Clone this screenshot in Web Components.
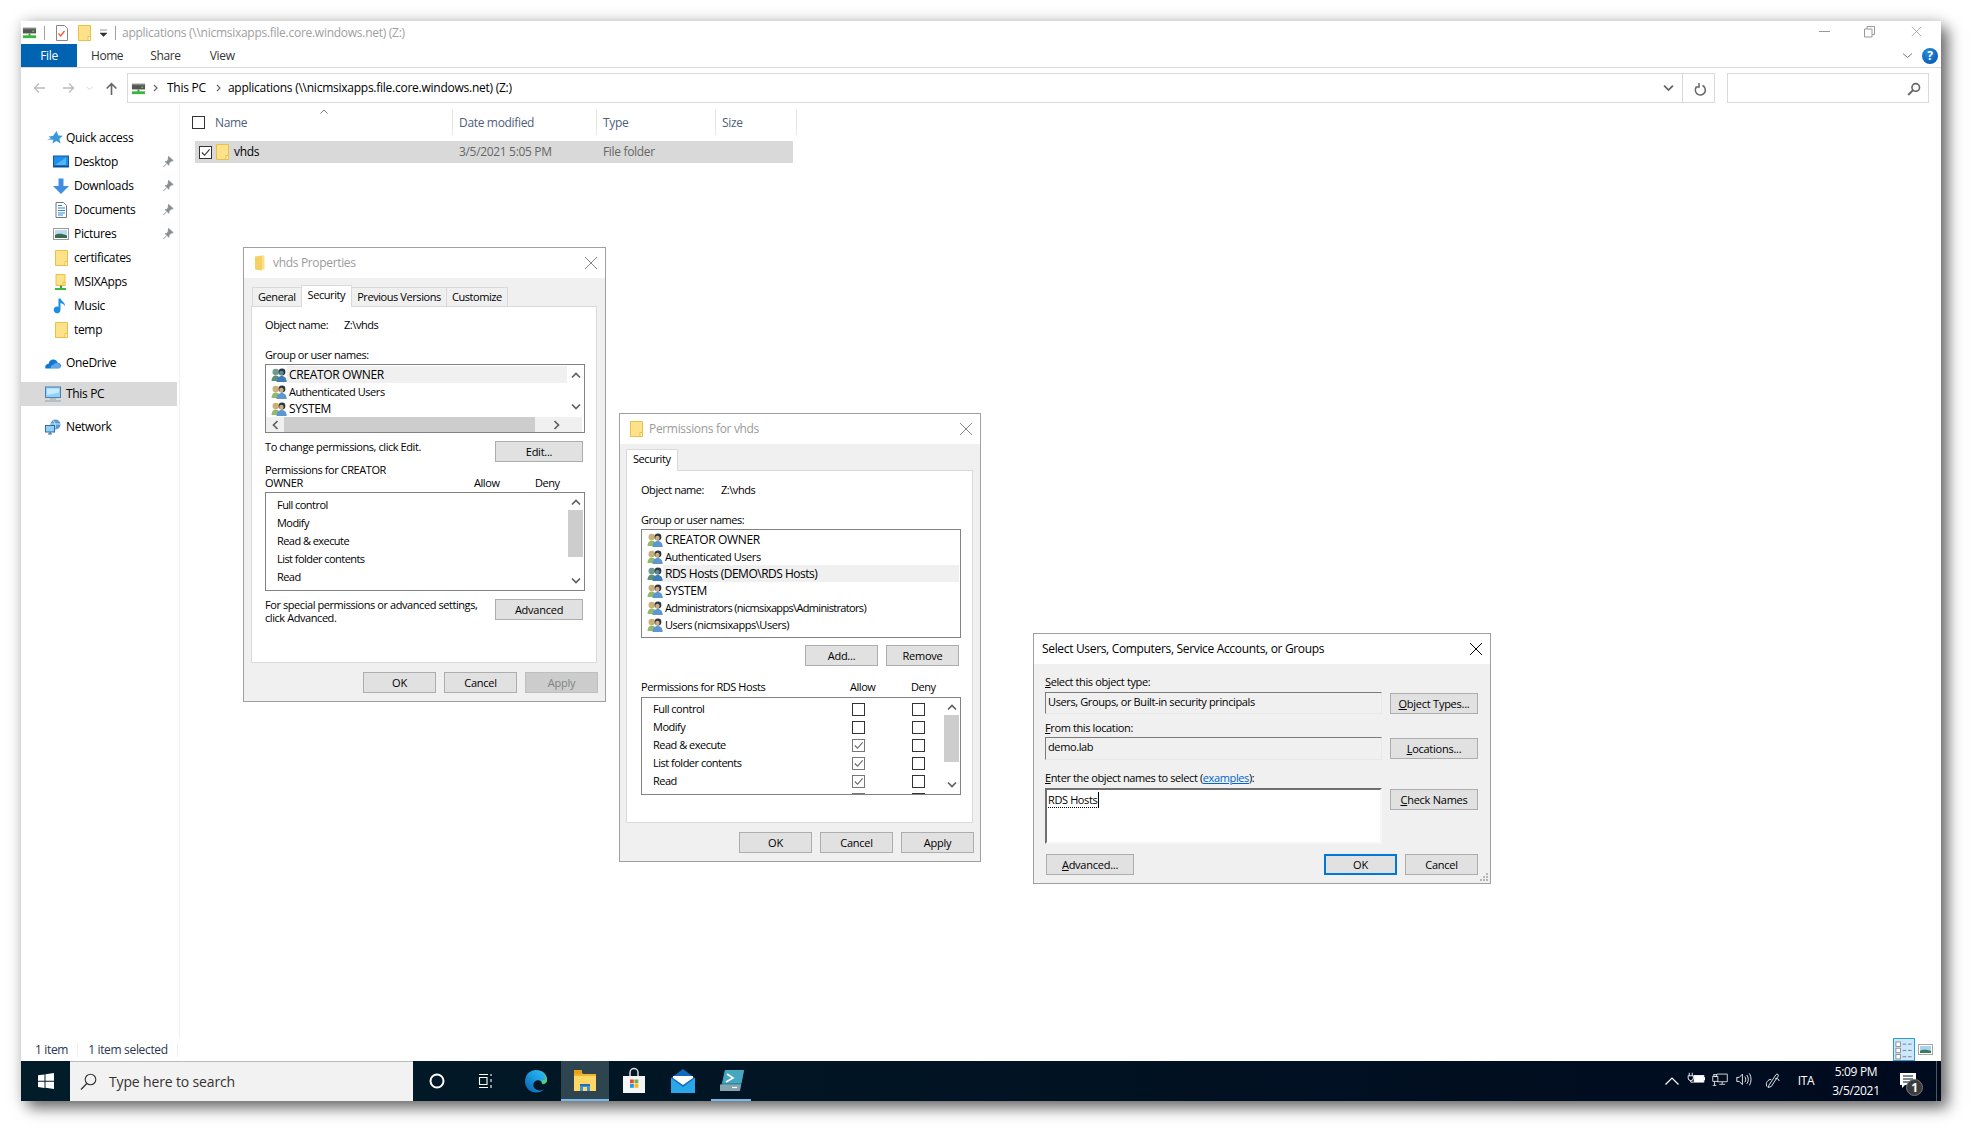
<!DOCTYPE html>
<html lang="en"><head><meta charset="utf-8"><title>Explorer</title>
<style>html,body{margin:0;padding:0;background:#fff;width:1983px;height:1143px;overflow:hidden}</style></head>
<body>
<x-desktop></x-desktop>
<script>
const def=(tag,css,html)=>customElements.define(tag,class extends HTMLElement{constructor(){super();this.attachShadow({mode:'open'}).innerHTML=`<style>${css}</style>${html}`;}});
const FONT='"Open Sans","Noto Sans",sans-serif';
const folder=`<path d="M2.5 .5h12v15h-12z" fill="#fde18b" stroke="#ebc044"/><path d="M12 11.500h2.500v4H12z" fill="#fff2c4" stroke="#ebc044"/>`;
const folderw=`<path d="M.5 .5h12v15H.5z" fill="#fde18b" stroke="#ebc044"/><path d="M10 11.500h2.500v4H10z" fill="#fff2c4" stroke="#ebc044"/>`;
const foldern=`<path d="M1 1.500l7-1v15l-7-1z" fill="#f6d063"/><path d="M8 .5h2.500v14H8z" fill="#fbe08a"/>`;
const users=(a,b,c,f)=>`<circle cx="4.800" cy="5" r="3.300" fill="${a}"/><path d="M.5 14c0-3.600 1.700-5.600 4.300-5.600 1.600 0 2.600.7 3.200 1.900V14z" fill="${b}"/><circle cx="11" cy="5" r="3.400" fill="#2b3644"/><circle cx="10.400" cy="6" r="2.200" fill="${f}"/><path d="M5.500 15c0-3.800 2.200-6 5.200-6s5 2.200 5 6z" fill="${c}"/>`;
const drive=`<rect x="1" y="3" width="14" height="6" fill="#555"/><rect x="1" y="3" width="14" height="1.500" fill="#888"/><rect x="11" y="6" width="2" height="1.200" fill="#5fdc5f"/><rect x="7" y="9" width="2" height="3" fill="#2da52d"/><rect x="1" y="11" width="14" height="3" fill="#3bb53b"/>`;
const ICONS={
folder,folderw,foldern,
drive,
star:`<path d="M9.500 1l1.800 4.400 4.700.4-3.600 3 1.200 4.700L9.500 11l-4.100 2.500 1-3.800L0 9.500l4-1.200L1.500 6.500l4.500-.6z" fill="#3a96dd"/>`,
desktop:`<rect x=".5" y="2" width="15" height="11" fill="#1e90e8" stroke="#0b5aa5"/><path d="M2 11L13 3.500V11z" fill="#54b4f5"/><rect x="1" y="11.500" width="14" height="1.500" fill="#0b4f8f"/>`,
download:`<path d="M5.500 .5h5v7.500H16l-8 8-8-8h5.500z" fill="#3f8ee0"/>`,
doc:`<path d="M3 .5h7.500l3 3v12H3z" fill="#fff" stroke="#777"/><path d="M5 3.500h4M5 6h7M5 8.500h7M5 11h7M5 13h5" stroke="#2a8ad4"/>`,
pic:`<rect x=".5" y="2.500" width="15" height="11" fill="#fff" stroke="#999"/><rect x="2" y="4" width="12" height="8" fill="#bcd9ee"/><path d="M2 9c3-2 7-1.500 12 .5V12H2z" fill="#3a6a52"/>`,
netfolder:`<path d="M3 .5h9v11H3z" fill="#fde18b" stroke="#ebc044"/><path d="M10 8h2v3.500h-2z" fill="#fff2c4" stroke="#ebc044"/><rect x="7" y="11.500" width="2" height="3" fill="#2da52d"/><rect x="2" y="14" width="11" height="2" fill="#3bb53b"/>`,
music:`<path d="M7.500.5v11.300a3.400 3.400 0 1 1-2-3V.5zM7.500.5c1 3 5 4 4.500 8-.5-2-2.500-3-4.500-3.500z" fill="#1a8fe3"/>`,
cloud:`<path d="M.5 13.500c-.8-2.500.7-4.500 3-4.500C4 5.500 6.500 4 9 4.500c2 .4 3.300 1.800 3.800 3.500 2-.2 3.200 1.500 3.200 3 0 1.500-1 2.500-2.500 2.500z" fill="#0f78d4"/><path d="M6 13.500c-.8-2 .5-3.600 2.500-3.700C9.300 8.500 10.500 8 12 8.100c1.500.1 3 1.200 3.200 2.700.5.500.8 1.500.3 2.700z" fill="#fff" opacity=".35"/>`,
pc:`<rect x=".5" y="1" width="15" height="10.500" fill="#8fd1fb" stroke="#4d7fa8"/><path d="M2 2.500h12v4L2 9z" fill="#c9ebff"/><path d="M5 13h6M0 15h16" stroke="#8fa3b5" stroke-width="1.200"/>`,
net:`<circle cx="10.500" cy="5.500" r="5" fill="#5b9bd5"/><path d="M8 1.500c2 2 3 5 2 8M5.500 5h10" stroke="#cde6f8" fill="none"/><rect x=".5" y="6.500" width="9" height="6.500" fill="#8fd1fb" stroke="#336b9c"/><path d="M3 15h4M5 13v2" stroke="#336b9c" stroke-width="1.200"/>`,
pin:`<path d="M7 1.500l5 4.500-2.500.7-2 2.500L7.500 11l-4-3.700 2.300-.6 1-2.300zM4.800 9.500L1.500 13" fill="#8a8f94" stroke="#8a8f94"/>`,
users:users('#c9b27a','#93b96c','#5e97cf','#d2ac80'),
users2:users('#6f9a8c','#5e8f74','#3f7db8','#5f8795'),
win:`<path d="M0 2.300l6.500-.9v6.300H0zM7.500 1.300L16 0v7.700H7.500zM0 8.700h6.500V15L0 14.100zM7.500 8.700H16V16l-8.500-1.200z" fill="#fff"/>`,
mag:`<circle cx="10.500" cy="6.500" r="5.300" fill="none" stroke="#333" stroke-width="1.100"/><path d="M6.800 10.500L1 16.500" stroke="#333" stroke-width="1.300"/>`,
cortana:`<circle cx="8" cy="8" r="6.500" fill="none" stroke="#fff" stroke-width="2"/>`,
task:`<path d="M3 1.500h9M3 14.500h9M3.500 4.500h7.500v7H3.500zM15 1v2M15 6v3M15 12v3" fill="none" stroke="#fff" stroke-width="1.100"/>`,
edge:`<defs><linearGradient id="e" x1="0" y1="1" x2="1" y2="0"><stop offset="0" stop-color="#0c59a4"/><stop offset=".55" stop-color="#1b9de2"/><stop offset="1" stop-color="#35c1f1"/></linearGradient></defs><path d="M12 1C5.500 1 1 6 1 12.500 1 19 6 23.500 12 23.500c3 0 6-1 8-3-3 1.500-8 1.500-10-2-1.500-2.500-.5-6 2.500-7 2-.7 5-.5 5.500 2.500.3 1.500 1 1.500 2.500 1 1.500-.7 2.500-2 2.500-4C23 5 18 1 12 1z" fill="url(#e)"/><path d="M23 11c0-6-5-10-11-10 5 0 9.500 3 9.500 8 0 2-2.500 3-4 2 .7 2-.2 3 .5 3.500C20 15 23 14 23 11z" fill="#5ed06e"/>`,
explorer:`<path d="M1 4h8l2 2h12v16H1z" fill="#fdd866"/><path d="M1 1h8v4H1z" fill="#e9a318"/><path d="M1 5h22v2H1z" fill="#f0b52e"/><path d="M7 22v-7h10v7h-3v-4h-4v4z" fill="#3f92d8"/><path d="M7 15h10v2H7z" fill="#1d6fb8"/>`,
store:`<path d="M8 7V3.500a4 4 0 0 1 8 0V7" fill="none" stroke="#ddd" stroke-width="1.500"/><rect x="1" y="7" width="22" height="17" fill="#f4f4f4"/><rect x="8" y="10.500" width="3.800" height="3.800" fill="#e74c2d"/><rect x="12.500" y="10.500" width="3.800" height="3.800" fill="#6db33f"/><rect x="8" y="15" width="3.800" height="3.800" fill="#1d9be8"/><rect x="12.500" y="15" width="3.800" height="3.800" fill="#fcb813"/>`,
mail:`<path d="M12 0L24 9v15H0V9z" fill="#0f6cbd"/><path d="M0 9l12 9 12-9v15H0z" fill="#2ba6ea"/><path d="M2 7h20v2l-10 7L2 9z" fill="#fff"/>`,
ps:`<path d="M5 1h19l-4 21H0z" fill="#2a8ca5"/><path d="M5 1h19l-2.500 13H2.600z" fill="#47a7c1"/><path d="M0 15.500h21l-1.300 6.500H0z" fill="#86a5ae"/><path d="M7 5l6 4-7 4" fill="none" stroke="#fff" stroke-width="1.600"/><path d="M12 18.500h5" stroke="#fff" stroke-width="1.200"/>`,
bat:`<path d="M3 1v4M7 1v4M1.500 5h7v3a3 3 0 0 1-7 0zM5 11v2.500h4" fill="none" stroke="#fff" stroke-width="1.200"/><rect x="9.500" y="4.500" width="13" height="9" fill="#fff" stroke="#fff"/><rect x="22.500" y="7" width="1.500" height="4" fill="#fff"/>`,
netw:`<path d="M7 1.500h14v10.500H7M14 12v3M10 15.500h8M1 4.500h7v7H1zM3.500 11.500v5.500M1 17h5" fill="none" stroke="#fff" stroke-width="1.100"/><rect x="2.500" y="2" width="4" height="3" fill="none" stroke="#fff"/>`,
vol:`<path d="M1 5.500h3l4-4v13l-4-4H1zM11 4.500c1.500 2 1.500 5 0 7M13.500 2.500c2.500 3 2.500 8 0 11M16.500 .5c3 4 3 11 0 15" fill="none" stroke="#fff" stroke-width="1.100"/>`,
pen:`<path d="M6 15.500L15 2c1.200-1.700 3.800 0 2.700 1.900L9 17l-4 1zM9 8c-4 0-7.500 4-5.500 9M14 7c3 0 4.500 0 5 3" fill="none" stroke="#fff" stroke-width="1.100"/>`,
action:`<path d="M0 0h16v12H5l-3 3v-3H0z" fill="#fff"/><path d="M3 3h10M3 6h10M3 9h7" stroke="#001020"/>`,
details:`<rect x="1" y="1" width="5" height="5" fill="#fff" stroke="#888"/><rect x="1" y="8" width="5" height="5" fill="#fff" stroke="#888"/><rect x="1" y="15" width="5" height="5" fill="#fff" stroke="#888"/><path d="M8.500 3.500h4m2 0h4m-10 7h4m2 0h4m-10 7h4m2 0h4" stroke="#777"/>`,
thumbs:`<rect x=".5" y=".5" width="14" height="10" fill="#fff" stroke="#a5a5a5"/><rect x="2" y="2" width="11" height="7" fill="#a9d2ee"/><path d="M2 7c3-2 7-1 11 0v2H2z" fill="#3a7a5c"/>`,
searchsm:`<circle cx="9" cy="5" r="3.500" fill="none" stroke="#666" stroke-width="1.500"/><path d="M6.500 7.500L2 12" stroke="#666" stroke-width="1.800"/>`,
refresh:`<path d="M10.500 3.500a5 5 0 1 1-6.500 2M7 1v4H3.500" fill="none" stroke="#666" stroke-width="1.500"/>`,
doccheck:`<path d="M1.500 .5h8l3 3v12h-11z" fill="#fff" stroke="#888"/><path d="M3.500 8.500l2.200 2.500 3.800-5" fill="none" stroke="#e8612c" stroke-width="1.400"/>`,
qatdrop:`<path d="M0 1h7M0 4h7l-3.500 3.500z" fill="#333" stroke="#333" stroke-width=".5"/>`,
x:`<path d="M1 1l12 12M13 1L1 13" fill="none" stroke="currentColor"/>`,
min:`<path d="M0 5.500h11" stroke="#999"/>`,
restore:`<path d="M3 3V.5h7.500v8H8M.5 3h7.500v8H.5z" fill="none" stroke="#999"/>`,
chevd:`<path d="M1 1.500l4.500 4 4.500-4" fill="none" stroke="currentColor" stroke-width="1"/>`,
chevdb:`<path d="M1 1.500l4 4 4-4" fill="none" stroke="currentColor" stroke-width="1.700"/>`,
chevu:`<path d="M1 5.500l4-4 4 4" fill="none" stroke="currentColor" stroke-width="1.700"/>`,
chevut:`<path d="M.5 7.500l6.500-6.500 6.500 6.500" fill="none" stroke="currentColor" stroke-width="1.200"/>`,
chevl:`<path d="M5.500 1l-4 4 4 4" fill="none" stroke="currentColor" stroke-width="1.700"/>`,
chevr:`<path d="M1.500 1l4 4-4 4" fill="none" stroke="currentColor" stroke-width="1.700"/>`,
crumb:`<path d="M1 1l3 3-3 3" fill="none" stroke="#666" stroke-width="1.200"/>`,
back:`<path d="M12 6H1.500M6 1.500L1.500 6 6 10.500" fill="none" stroke="currentColor" stroke-width="1.300"/>`,
fwd:`<path d="M0 6h10.500M6 1.500L10.500 6 6 10.500" fill="none" stroke="currentColor" stroke-width="1.300"/>`,
up:`<path d="M6 12V1.500M1.500 6L6 1.500 10.500 6" fill="none" stroke="currentColor" stroke-width="1.500"/>`,
caret:`<path d="M.5 4.500L4 1l3.500 3.500" fill="none" stroke="#777"/>`,
grip:`<path d="M8 2h2v2H8zM5 5h2v2H5zM8 5h2v2H8zM2 8h2v2H2zM5 8h2v2H5zM8 8h2v2H8z" fill="#b5b5b5"/>`,
check:`<path d="M2 6l3 3 5.500-6.500" fill="none" stroke="currentColor" stroke-width="1.200"/>`
};
const VB={folderw:13,foldern:14,pin:14,mag:17,edge:24,explorer:24,store:24,mail:24,ps:24,details:20,thumbs:15,searchsm:12,refresh:13,doccheck:14,x:14,grip:11,check:12,chevd:11,chevdb:10,chevu:10,chevut:14,chevl:7,chevr:7,crumb:5,back:12,fwd:12,up:12,caret:8,bat:24,netw:22,vol:20,pen:20,qatdrop:7,min:11,restore:11};
customElements.define('x-ic',class extends HTMLElement{
  constructor(){super();this.attachShadow({mode:'open'});}
  connectedCallback(){
    const n=this.getAttribute('n'),w=+(this.getAttribute('w')||16),h=+(this.getAttribute('h')||w),v=VB[n]||16;
    this.shadowRoot.innerHTML=`<style>:host{display:inline-flex;flex:none;width:${w}px;height:${h}px;line-height:0}svg{width:100%;height:100%;overflow:visible}</style><svg viewBox="0 0 ${v} ${v*h/w}" aria-hidden="true">${ICONS[n]}</svg>`;
  }
});
const I=(n,w,h)=>`<x-ic n="${n}" w="${w}" ${h?`h="${h}"`:''}></x-ic>`;

def('w-btn',`:host{display:inline-flex;align-items:center;justify-content:center;box-sizing:border-box;height:21px;width:73px;background:#e1e1e1;border:1px solid #adadad;color:#000;flex:none;font-size:11px;letter-spacing:-.25px}
:host([disabled]){background:#ccc;border-color:#bfbfbf;color:#838383}
:host([def]){border:2px solid #0078d7}`,`<slot></slot>`);

def('w-tab',`:host{display:flex;align-items:center;box-sizing:border-box;height:19px;background:#f0f0f0;border:1px solid #d9d9d9;border-bottom:0;padding:0 5px;margin-right:-1px;flex:none;font-size:11px;letter-spacing:-.42px}
:host([sel]){background:#fff;position:relative;margin-bottom:-1px;height:22px;padding:1px 6px 0;z-index:1;align-items:flex-start}`,`<slot></slot>`);

def('w-dialog',`:host{position:absolute;display:flex;flex-direction:column;box-sizing:border-box;background:#f0f0f0;border:1px solid #a0a0a0;color:#000}
.t{display:flex;align-items:center;height:30px;background:#fff;flex:none;padding:0 7px 0 var(--pl,10px);gap:var(--g,5px);color:var(--tc,#9b9b9b)}
.t span{flex:1}.x{color:var(--tc,#888);display:flex}`,`<div class="t"><slot name="ic"></slot><span><slot name="title"></slot></span><div class="x">${I('x',14)}</div></div><slot></slot>`);

def('scroll-v',`:host{display:flex;flex-direction:column;align-items:center;width:15px;flex:none;height:100%;color:#606060;box-sizing:border-box;padding:var(--sp,5px) 0}
.th{width:15px;background:#cdcdcd;height:47px;margin-top:var(--tm,3px)}.sp{flex:1}`,`${I('chevu',10,7)}<div class="th" part="th"></div><div class="sp"></div>${I('chevdb',10,7)}`);

def('user-row',`:host{display:flex;height:17px;align-items:center;padding-left:5px;white-space:nowrap;font-size:11px;letter-spacing:-.45px}
:host([caps]){font-size:12px;letter-spacing:-.33px}
:host([mix]){font-size:12px;letter-spacing:-.5px}
:host([tight]){letter-spacing:-.66px}
.b{flex:1;height:17px;line-height:17px;padding-left:2px}
:host([hl]) .b{background:#f0f0f0}`,`<slot name="i"></slot><div class="b"><slot></slot></div>`);

const urow=(t,i='users',h='')=>`<user-row ${h}><x-ic slot="i" n="${i}" w="16"></x-ic>${t}</user-row>`;

def('props-dialog',`:host{display:contents}
w-dialog{left:243px;top:247px;width:363px;height:455px}
.tabs{display:flex;align-items:flex-end;margin:7px 0 0 8px;height:21px}
.panel{background:#fff;border:1px solid #d9d9d9;margin:0 8px 0 7px;height:357px;box-sizing:border-box;padding:10px 0 0 13px;font-size:11px;letter-spacing:-.43px;white-space:nowrap}
.l{line-height:16px}
.obj{display:flex}.obj span:first-child{width:79px}
.grp{margin-top:14px}
.box{width:320px;box-sizing:border-box;border:1px solid #828282;background:#fff;margin-top:1px;overflow:hidden}
.ub{height:69px;display:grid;grid-template-columns:1fr 17px;grid-template-rows:52px 15px}
.ub scroll-v{height:52px;--sp:7px;margin-left:1px}.ub scroll-v::part(th){display:none}
.rows{padding-top:1px;overflow:hidden;min-width:0}
.h{grid-column:1/3;display:flex;align-items:center;background:#f0f0f0;color:#606060;padding:0 22px 0 6px;margin:0 2px 0 0}
.h i{display:block;background:#cdcdcd;height:15px;width:251px;margin:0 auto 0 5px}
.sr{display:flex;justify-content:space-between;width:318px;margin-top:8px}
.sr>.tx{line-height:12.500px}
.sr>.u{line-height:16px;margin-top:-2px}
.per{display:grid;grid-template-columns:209px 61px auto;margin-top:1px;line-height:13px;align-items:end}
.pb{height:99px;margin-top:3px;display:flex}
.pr{flex:1;padding:3px 0 0 11px;letter-spacing:-.55px}.pr div{height:18px;line-height:18px}
.pb scroll-v{--sp:6px;--tm:4px;margin-right:1px}
.btns{display:flex;justify-content:flex-end;gap:8px;margin:9px 7px 0 0}`,
`<w-dialog><x-ic slot="ic" n="foldern" w="14" h="16"></x-ic><span slot="title">vhds Properties</span>
<div class="tabs"><w-tab>General</w-tab><w-tab sel>Security</w-tab><w-tab>Previous Versions</w-tab><w-tab>Customize</w-tab></div>
<div class="panel">
<div class="l obj"><span>Object name:</span><span>Z:\\vhds</span></div>
<div class="l grp">Group or user names:</div>
<div class="box ub"><div class="rows">${urow('CREATOR OWNER','users2','hl caps')}${urow('Authenticated Users')}${urow('SYSTEM','users','caps')}</div><scroll-v></scroll-v><div class="h">${I('chevl',7,10)}<i></i>${I('chevr',7,10)}</div></div>
<div class="sr"><span class="u">To change permissions, click Edit.</span><w-btn style="width:88px">Edit...</w-btn></div>
<div class="per"><span>Permissions for CREATOR<br>OWNER</span><span>Allow</span><span>Deny</span></div>
<div class="box pb"><div class="pr"><div>Full control</div><div>Modify</div><div>Read &amp; execute</div><div>List folder contents</div><div>Read</div></div><scroll-v></scroll-v></div>
<div class="sr"><span class="tx">For special permissions or advanced settings,<br>click Advanced.</span><w-btn style="width:88px">Advanced</w-btn></div>
</div>
<div class="btns"><w-btn>OK</w-btn><w-btn>Cancel</w-btn><w-btn disabled>Apply</w-btn></div>
</w-dialog>`);

def('perm-dialog',`:host{display:contents}
w-dialog{left:619px;top:413px;width:362px;height:449px;--g:6px;--pl:10px}
.tabs{display:flex;align-items:flex-end;margin:5px 0 0 6px;height:21px}
.panel{background:#fff;border:1px solid #d9d9d9;margin:0 7px 0 6px;height:353px;box-sizing:border-box;padding:11px 0 0 14px;font-size:11px;letter-spacing:-.45px;white-space:nowrap}
.l{line-height:16px}
.obj{display:flex}.obj span:first-child{width:80px}
.grp{margin-top:14px}
.box{width:320px;box-sizing:border-box;border:1px solid #828282;background:#fff}
.ub{height:109px;margin-top:1px;padding:1px 1px 0 0}
.sr{display:flex;justify-content:flex-end;gap:8px;width:318px;margin-top:7px}
.per{display:grid;grid-template-columns:209px 61px auto;margin-top:13px;line-height:16px}
.pb{height:98px;margin-top:2px;display:flex;overflow:hidden}
.pr{flex:1;padding:2px 0 0 11px;letter-spacing:-.5px}
.pb scroll-v{--sp:6px;--tm:4px;margin-right:1px}
.btns{display:flex;justify-content:flex-end;gap:8px;margin:9px 6px 0 0}`,
`<w-dialog><x-ic slot="ic" n="folderw" w="13" h="16"></x-ic><span slot="title">Permissions for vhds</span>
<div class="tabs"><w-tab sel>Security</w-tab></div>
<div class="panel">
<div class="l obj"><span>Object name:</span><span>Z:\\vhds</span></div>
<div class="l grp">Group or user names:</div>
<div class="box ub">${urow('CREATOR OWNER','users','caps')}${urow('Authenticated Users')}${urow('RDS Hosts (DEMO\\RDS Hosts)','users2','hl mix')}${urow('SYSTEM','users','caps')}${urow('Administrators (nicmsixapps\\Administrators)','users','tight')}${urow('Users (nicmsixapps\\Users)')}</div>
<div class="sr"><w-btn>Add...</w-btn><w-btn>Remove</w-btn></div>
<div class="per"><span>Permissions for RDS Hosts</span><span>Allow</span><span>Deny</span></div>
<div class="box pb"><div class="pr"><perm-row>Full control</perm-row><perm-row>Modify</perm-row><perm-row a>Read &amp; execute</perm-row><perm-row a>List folder contents</perm-row><perm-row a>Read</perm-row><perm-row a></perm-row></div><scroll-v></scroll-v></div>
</div>
<div class="btns"><w-btn>OK</w-btn><w-btn>Cancel</w-btn><w-btn>Apply</w-btn></div>
</w-dialog>`);

customElements.define('perm-row',class extends HTMLElement{constructor(){super();
this.attachShadow({mode:'open'}).innerHTML=`<style>:host{display:grid;grid-template-columns:199px 60px 13px;height:18px;align-items:center;white-space:nowrap}
.c{width:13px;height:13px;box-sizing:border-box;border:1px solid #333;display:flex;align-items:center;justify-content:center;color:#666}
.c.on{border-color:#777}</style><span><slot></slot></span><span class="c" id="a"></span><span class="c"></span>`;}
connectedCallback(){if(this.hasAttribute('a')){const c=this.shadowRoot.getElementById('a');c.classList.add('on');c.innerHTML=I('check',11);}}});

def('select-dialog',`:host{display:contents}
w-dialog{left:1033px;top:633px;width:458px;height:251px;--tc:#000;--pl:8px}
.body{position:relative;flex:1;display:grid;grid-template-columns:337px 88px;column-gap:8px;padding:10px 0 0 11px;align-content:start;line-height:16px;font-size:11px;letter-spacing:-.38px;white-space:nowrap}
.lab{grid-column:1/3}
.f{box-sizing:border-box;height:22px;margin-top:2px;background:#f0f0f0;border:1px solid;border-color:#7a7a7a #e8e8e8 #e8e8e8 #7a7a7a;padding:1px 0 0 2px}
.f.b{height:23px;margin-top:1px}
w-btn{width:88px;margin-top:3px}
.ta{height:56px;margin-top:2px;background:#fff;border:2px solid;border-color:#6f6f6f #f7f7f7 #f7f7f7 #6f6f6f;padding:2px 0 0 1px;box-sizing:border-box}
.ta span{border-bottom:1px dotted #000;border-right:1px solid #000;padding-right:1px;display:inline-block;line-height:15px}
a{color:#0066cc;text-decoration:underline}
.foot{grid-column:1/3;display:flex;gap:8px;margin-top:10px;padding-left:1px;width:432px}
.foot w-btn{margin:0;width:73px}.foot w-btn:first-child{width:88px;margin-right:auto}
.g{position:absolute;right:1px;bottom:1px;display:flex}`,
`<w-dialog><span slot="title">Select Users, Computers, Service Accounts, or Groups</span>
<div class="body">
<div class="lab"><u>S</u>elect this object type:</div>
<div class="f">Users, Groups, or Built-in security principals</div><w-btn><u>O</u>bject Types...</w-btn>
<div class="lab" style="margin-top:6px"><u>F</u>rom this location:</div>
<div class="f b">demo.lab</div><w-btn style="margin-top:2px"><u>L</u>ocations...</w-btn>
<div class="lab" style="margin-top:10px"><u>E</u>nter the object names to select (<a>examples</a>):</div>
<div class="ta"><span>RDS Hosts</span></div><w-btn><u>C</u>heck Names</w-btn>
<div class="foot"><w-btn><u>A</u>dvanced...</w-btn><w-btn def>OK</w-btn><w-btn>Cancel</w-btn></div>
<div class="g">${I('grip',11)}</div>
</div></w-dialog>`);

def('win-title',`:host{display:flex;align-items:center;height:23px;flex:none;color:#a0a0a0;position:relative;letter-spacing:-.27px}
.i{display:flex;align-items:center;width:101px;flex:none}
.sep{width:1px;height:14px;background:#a0a0a0;flex:none}
.c{margin-left:auto;display:flex;align-items:center;margin-top:-3px}`,
`<div class="i" style="padding-left:1px;box-sizing:border-box">${I('drive',15)}<span class="sep" style="margin:0 10px 0 7px"></span>${I('doccheck',14,16)}<span style="width:9px"></span>${I('folderw',13,16)}<span style="width:9px"></span>${I('qatdrop',7,8)}<span class="sep" style="margin-left:8px"></span></div>
<span>applications (\\\\nicmsixapps.file.core.windows.net) (Z:)</span>
<div class="c"><span style="display:flex">${I('min',11)}</span><span style="margin-left:34px;display:flex">${I('restore',11)}</span><span style="margin-left:36px;margin-right:19px;display:flex;color:#999">${I('x',11)}</span></div>`);

def('win-ribbon',`:host{display:flex;height:24px;align-items:stretch;flex:none;border-bottom:1px solid #dadbdc;box-sizing:border-box;color:#333}
.f{width:56px;background:#0063b1;color:#fff;display:flex;align-items:center;justify-content:center}
span.t{display:flex;align-items:center}
.r{margin-left:auto;display:flex;align-items:center;gap:9px;padding-right:3px;color:#777}
.h{width:16px;height:16px;border-radius:50%;background:radial-gradient(circle at 40% 30%,#2a8be0,#0050a5);color:#fff;font:bold 12px/16px ${FONT};text-align:center}`,
`<div class="f">File</div><span class="t" style="margin-left:14px;letter-spacing:-.45px">Home</span><span class="t" style="margin-left:27px">Share</span><span class="t" style="margin-left:29px">View</span><div class="r">${I('chevd',11,7)}<div class="h">?</div></div>`);

def('win-addr',`:host{display:flex;height:30px;align-items:center;flex:none;margin:5px 0 1px;color:#000;box-sizing:border-box;letter-spacing:-.25px}
.nav{display:flex;align-items:center;width:106px;flex:none;padding-left:12px;box-sizing:border-box}
.box{display:flex;align-items:center;height:30px;border:1px solid #d9d9d9;box-sizing:border-box;width:1588px;flex:none}
.crumbs{flex:1;display:flex;align-items:center;padding-left:3px;white-space:nowrap}
.b2{width:31px;height:100%;border-left:1px solid #d9d9d9;display:flex;align-items:center;justify-content:center}
.dd{color:#666;display:flex;margin-right:8px}
.s{display:flex;justify-content:flex-end;align-items:center;height:30px;border:1px solid #d9d9d9;box-sizing:border-box;width:202px;margin-left:12px;padding-right:9px}`,
`<div class="nav"><span style="color:#bbb;display:flex">${I('back',12)}</span><span style="color:#bbb;display:flex;margin-left:18px">${I('fwd',12)}</span><span style="color:#bbb;display:flex;margin-left:11px">${I('chevd',7,5)}</span><span style="color:#666;display:flex;margin-left:12px">${I('up',13)}</span></div>
<div class="box"><div class="crumbs">${I('drive',15)}<span style="width:7px"></span>${I('crumb',5,8)}<span style="width:9px"></span>This PC<span style="width:10px"></span>${I('crumb',5,8)}<span style="width:7px"></span>applications (\\\\nicmsixapps.file.core.windows.net) (Z:)</div><span class="dd">${I('chevdb',11,8)}</span><div class="b2">${I('refresh',13)}</div></div>
<div class="s">${I('searchsm',13)}</div>`);

def('nav-item',`:host{display:flex;align-items:center;height:24px;padding-left:26px;white-space:nowrap;color:#000;box-sizing:border-box;gap:3px;position:relative}
:host([sub]){padding-left:32px;gap:5px}
:host([top]){padding-left:24px;gap:5px}
:host([sel]){background:#d9d9d9}`,
`<slot name="i"></slot><span><slot></slot></span><slot name="pin"></slot>`);

def('nav-pane',`:host{display:block;width:159px;flex:none;border-right:1px solid #f0f0f0;box-sizing:border-box;padding:22px 2px 0 0}
.g{margin-top:9px}.g2{margin-top:7px}`,
`<nav-item><x-ic slot="i" n="star"></x-ic>Quick access</nav-item>
${[['desktop','Desktop'],['download','Downloads'],['doc','Documents'],['pic','Pictures']].map(a=>`<nav-item sub><x-ic slot="i" n="${a[0]}"></x-ic>${a[1]}<pin-mark slot="pin"></pin-mark></nav-item>`).join('')}
<nav-item sub><x-ic slot="i" n="folder"></x-ic>certificates</nav-item>
<nav-item sub><x-ic slot="i" n="netfolder"></x-ic>MSIXApps</nav-item>
<nav-item sub><x-ic slot="i" n="music"></x-ic>Music</nav-item>
<nav-item sub><x-ic slot="i" n="folder"></x-ic>temp</nav-item>
<nav-item top class="g"><x-ic slot="i" n="cloud"></x-ic>OneDrive</nav-item>
<nav-item top class="g2" sel><x-ic slot="i" n="pc"></x-ic>This PC</nav-item>
<nav-item top class="g"><x-ic slot="i" n="net"></x-ic>Network</nav-item>`);
def('pin-mark',`:host{position:absolute;left:141px;top:5px;display:flex}`,I('pin',13));

def('file-list',`:host{display:block;flex:1;position:relative;padding-top:6px;color:#000}
.hd{display:grid;grid-template-columns:273px 144px 119px 81px;height:25px;color:#4c607a}
.hd>div{border-right:1px solid #e5e5e5;padding-left:6px;display:flex;align-items:center;box-sizing:border-box}
.hd>div:first-child{padding-left:12px;gap:10px}
.cb{width:13px;height:13px;border:1px solid #333;box-sizing:border-box;flex:none;display:flex;align-items:center;justify-content:center;background:#fff;color:#333}
.car{position:absolute;left:140px;top:5px;display:flex}
.row{display:grid;grid-template-columns:264px 144px 190px;height:22px;margin:6px 0 0 15px;background:#d9d9d9;align-items:center;width:598px;color:#666}
.n{display:flex;align-items:center;padding-left:4px;color:#000}`,
`<div class="hd"><div><span class="cb"></span>Name</div><div>Date modified</div><div>Type</div><div>Size</div></div>
<span class="car">${I('caret',8,5)}</span>
<div class="row"><div class="n"><span class="cb">${I('check',11)}</span><span style="width:4px"></span>${I('folderw',13,16)}<span style="width:5px"></span>vhds</div><div>3/5/2021 5:05 PM</div><div>File folder</div></div>`);

def('win-status',`:host{display:flex;height:23px;align-items:center;flex:none;color:#2a3550;box-sizing:border-box;position:relative}
.c{padding:0 9px 0 14px;border-right:1px solid #eee;height:14px;display:flex;align-items:center}
.c+.c{padding:0 9px 0 10px}
.v{margin-left:auto;display:flex;align-items:center;margin-right:8px}
.d{width:22px;height:23px;box-sizing:border-box;background:#cce8ff;border:1px solid #26a0da;display:flex;align-items:center;justify-content:center}`,
`<div class="c">1 item</div><div class="c">1 item selected</div><div class="v"><div class="d">${I('details',18)}</div><span style="width:3px"></span>${I('thumbs',15,11)}</div>`);

def('task-bar',`:host{display:flex;height:40px;flex:none;background:linear-gradient(90deg,#021c29,#000a1e);color:#fff;align-items:stretch;white-space:nowrap}
.st{width:49px;display:flex;align-items:center;justify-content:center}
.se{width:343px;background:#f2f2f2;border-top:1px solid #bbb;box-sizing:border-box;display:flex;align-items:center;padding-left:10px;gap:12px;color:#333;font-size:14px;letter-spacing:-.15px}
.b{width:49px;display:flex;align-items:center;justify-content:center;box-sizing:border-box;position:relative}
.b.a:after{content:"";position:absolute;left:4px;right:5px;bottom:0;height:2px;background:#76b9ed}
.b.e{background:#2e454f;width:48px}.b.e:after{left:0;right:0}
.tr{margin-left:auto;display:flex;align-items:center;height:100%}
.tr>div{display:flex;align-items:center;justify-content:center;height:100%;flex:none}
.ck{flex-direction:column;text-align:center;line-height:19px;width:64px;font-size:12px}
.ac{width:40px;position:relative}
.bd{position:absolute;left:18px;top:18px;width:17px;height:17px;border-radius:50%;background:#3c3c3c;border:1px solid #777;box-sizing:border-box;font-size:12px;font-weight:700;line-height:15px;text-align:center}
.end{box-sizing:border-box;border-right:1px solid #555;margin-right:4px}`,
`<div class="st">${I('win',16)}</div>
<div class="se">${I('mag',17)}<span>Type here to search</span></div>
<div class="b" style="width:48px">${I('cortana',16)}</div><div class="b" style="width:46px">${I('task',16)}</div><div class="b" style="width:54px;padding-left:3px">${I('edge',24)}</div><div class="b a e">${I('explorer',24)}</div><div class="b">${I('store',24)}</div><div class="b">${I('mail',24)}</div><div class="b a">${I('ps',24)}</div>
<div class="tr"><div style="width:24px">${I('chevut',14,8)}</div><div style="width:24px">${I('bat',18)}</div><div style="width:24px">${I('netw',16)}</div><div style="width:24px">${I('vol',16)}</div><div style="width:32px">${I('pen',16)}</div><div style="width:36px">ITA</div><div class="ck"><span>5:09 PM</span><span>3/5/2021</span></div><div class="ac">${I('action',16)}<span class="bd">1</span></div><div class="end" style="width:9px"></div></div>`);

def('win-shell',`:host{display:flex;flex-direction:column;width:1920px;height:1080px;margin:21px 0 0 21px;background:#fff;box-shadow:7px 7px 14px rgba(0,0,0,.55),0 0 14px rgba(0,0,0,.16)}
.m{flex:1;display:flex;min-height:0}`,
`<win-title></win-title><win-ribbon></win-ribbon><win-addr></win-addr><div class="m"><nav-pane></nav-pane><file-list></file-list></div><win-status></win-status><task-bar></task-bar>`);

def('x-desktop',`:host{display:block;position:relative;width:1983px;height:1143px;overflow:hidden;background:#fff;font:12px/16px ${FONT};letter-spacing:-.33px}`,
`<win-shell></win-shell><props-dialog></props-dialog><perm-dialog></perm-dialog><select-dialog></select-dialog>`);
</script>
</body></html>
